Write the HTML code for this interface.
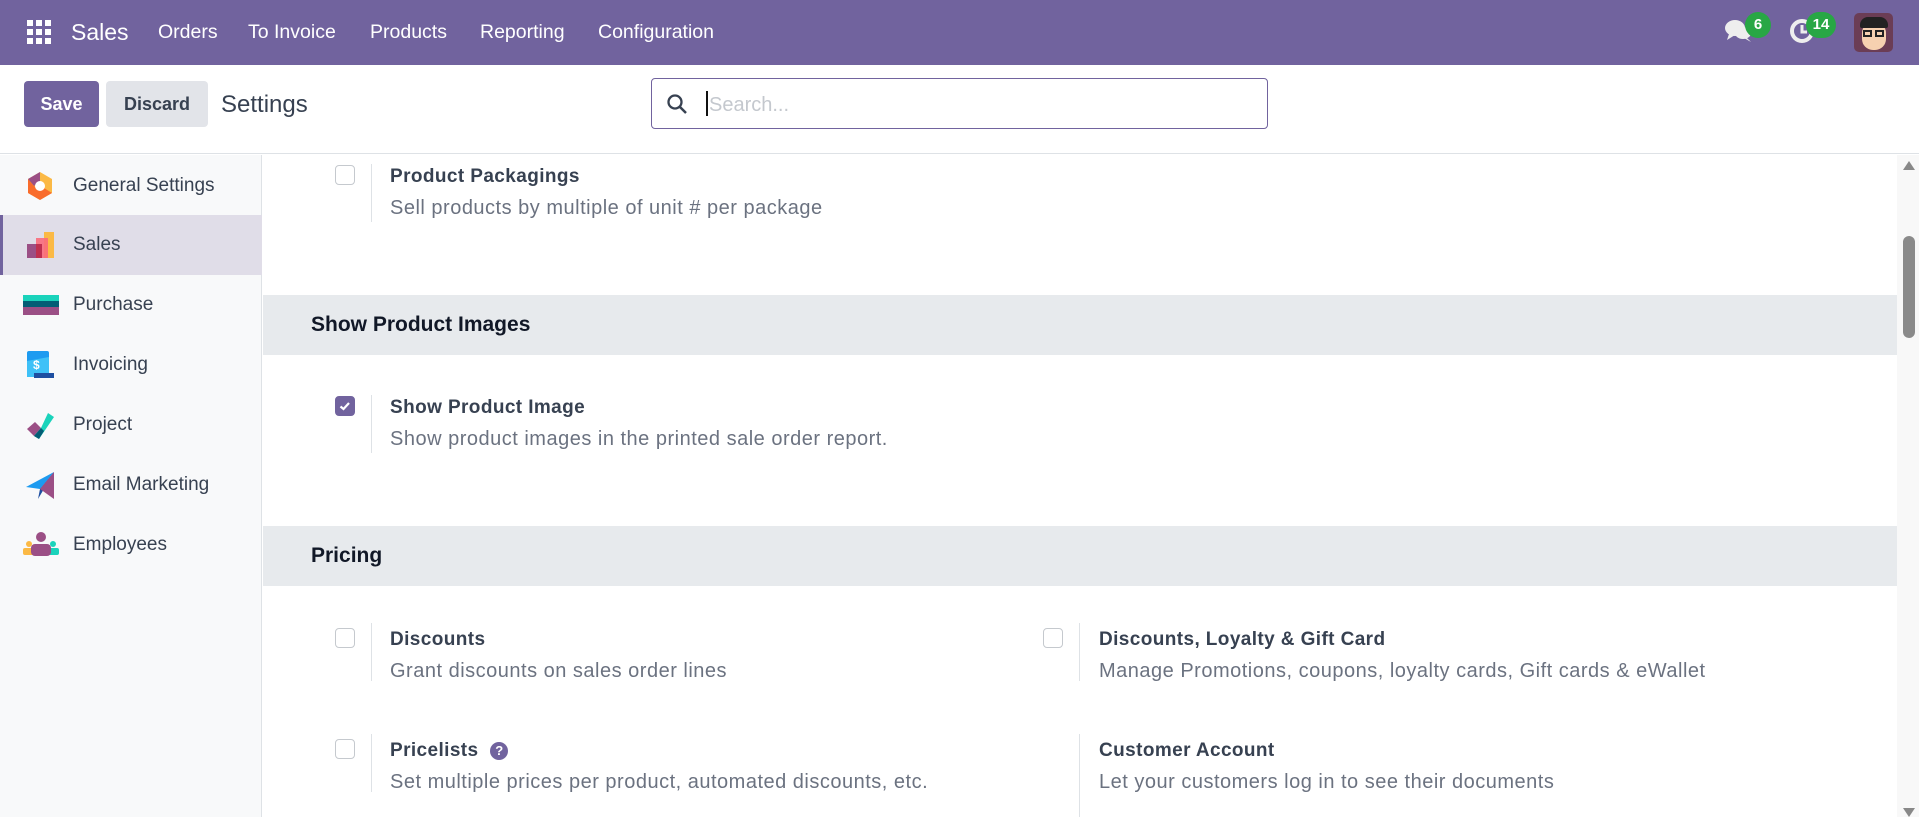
<!DOCTYPE html>
<html><head><meta charset="utf-8"><style>
*{box-sizing:border-box;margin:0;padding:0}
body{width:1919px;height:817px;overflow:hidden;font-family:"Liberation Sans",sans-serif;background:#fff;color:#374151;position:relative}
.abs{position:absolute}
.nav{left:0;top:0;width:1919px;height:65px;background:#71639e}
.nav span{position:absolute;color:#fff;font-size:19.5px;top:21px}
.cp{left:0;top:65px;width:1919px;height:89px;border-bottom:1px solid #dee2e6;background:#fff}
.btn{position:absolute;top:81px;height:46px;border-radius:4px;font-weight:bold;font-size:18px;line-height:46px;text-align:center}
.side{left:0;top:155px;width:262px;height:662px;background:#f8f9fa;border-right:1px solid #dee2e6}
.si{position:absolute;left:0;width:262px;height:60px}
.si .t{position:absolute;left:73px;top:19px;font-size:19px;color:#374151}
.si svg{position:absolute;left:24px;top:14px}
.hdr{position:absolute;left:263px;width:1634px;height:60px;background:#e7eaed}
.hdr span{position:absolute;left:48px;top:18px;font-size:21px;font-weight:bold;color:#111827}
.cb{position:absolute;width:20px;height:20px;border:1px solid #c5c9ce;border-radius:4px;background:#fff}
.vl{position:absolute;width:1px;height:58px;background:#dee2e6}
.tt{position:absolute;font-size:19px;letter-spacing:0.4px;font-weight:bold;color:#374151}
.dd{position:absolute;font-size:20px;letter-spacing:0.5px;color:#6b7280}
</style></head><body>
<div class="abs nav">
<svg class="abs" style="left:27px;top:20px" width="24" height="24" viewBox="0 0 24 24" fill="#fff"><rect x="0" y="0" width="6" height="6"/><rect x="9" y="0" width="6" height="6"/><rect x="18" y="0" width="6" height="6"/><rect x="0" y="9" width="6" height="6"/><rect x="9" y="9" width="6" height="6"/><rect x="18" y="9" width="6" height="6"/><rect x="0" y="18" width="6" height="6"/><rect x="9" y="18" width="6" height="6"/><rect x="18" y="18" width="6" height="6"/></svg>
<span style="left:71px;top:19px;font-size:23px">Sales</span>
<span style="left:158px">Orders</span>
<span style="left:248px">To Invoice</span>
<span style="left:370px">Products</span>
<span style="left:480px">Reporting</span>
<span style="left:598px">Configuration</span>
<svg class="abs" style="left:1724px;top:18px" width="30" height="26" viewBox="0 0 30 26" fill="#eee"><ellipse cx="11" cy="10" rx="10" ry="8"/><path d="M5 16 L3 22 L11 17Z"/><ellipse cx="19" cy="15" rx="8" ry="6"/><path d="M22 19 L27 24 L20 20Z"/></svg>
<div class="abs" style="left:1745px;top:12px;width:26px;height:26px;border-radius:13px;background:#28a745;color:#fff;font-weight:bold;font-size:15px;text-align:center;line-height:26px">6</div>
<svg class="abs" style="left:1788px;top:17px" width="28" height="28" viewBox="0 0 28 28"><circle cx="14" cy="14" r="10" fill="none" stroke="#eee" stroke-width="4"/><path d="M14 8 V15 H19" stroke="#eee" stroke-width="3" fill="none"/></svg>
<div class="abs" style="left:1806px;top:12px;width:30px;height:26px;border-radius:13px;background:#28a745;color:#fff;font-weight:bold;font-size:15px;text-align:center;line-height:26px">14</div>
<div class="abs" style="left:1854px;top:13px;width:39px;height:39px;border-radius:5px;background:#6b3d55;overflow:hidden">
<div class="abs" style="left:8px;top:9px;width:24px;height:28px;border-radius:11px;background:#f6d1b0"></div>
<div class="abs" style="left:6px;top:4px;width:28px;height:11px;border-radius:8px 8px 2px 2px;background:#222"></div>
<div class="abs" style="left:9px;top:17px;width:9px;height:7px;border:2px solid #222"></div>
<div class="abs" style="left:21px;top:17px;width:9px;height:7px;border:2px solid #222"></div>
</div>
</div>
<div class="abs cp">
<div class="btn" style="left:24px;top:16px;width:75px;background:#71639e;color:#fff">Save</div>
<div class="btn" style="left:106px;top:16px;width:102px;background:#e2e4e9;color:#374151">Discard</div>
<div class="abs" style="left:221px;top:26px;font-size:24px;color:#374151">Settings</div>
<div class="abs" style="left:651px;top:13px;width:617px;height:51px;border:1px solid #71639e;border-radius:4px">
<svg class="abs" style="left:14px;top:14px" width="22" height="22" viewBox="0 0 22 22"><circle cx="9" cy="9" r="6.5" fill="none" stroke="#374151" stroke-width="2.3"/><path d="M14 14 L20 20" stroke="#374151" stroke-width="2.5"/></svg>
<div class="abs" style="left:54px;top:12px;width:2px;height:25px;background:#111"></div>
<div class="abs" style="left:57px;top:15px;font-size:20px;color:#c4c8ce">Search...</div>
</div>
</div>
<div class="abs side">
<div class="si" style="top:1px"><svg width="32" height="32" viewBox="0 0 32 32"><path d="M16 2 L28 9 V23 L16 30 L4 23 V9Z" fill="#fbb945"/><path d="M4 9 L16 2 V12 L10 16Z" fill="#9b4f85"/><path d="M4 23 L16 30 L28 23 L20 18 L16 20 L10 16 L4 9Z" fill="#f96c2b"/><circle cx="16" cy="16" r="5" fill="#fff"/></svg><span class="t">General Settings</span></div>
<div class="si" style="top:60px;background:#e0dde8;border-left:3px solid #71639e"><svg width="32" height="32" viewBox="0 0 32 32" style="left:21px"><rect x="20" y="3" width="10" height="26" fill="#fbb945"/><rect x="12" y="9" width="12" height="20" fill="#f96c7b" opacity=".9"/><rect x="3" y="15" width="12" height="14" fill="#9b4f85"/><rect x="12" y="15" width="6" height="14" fill="#c0304f"/></svg><span class="t" style="left:70px">Sales</span></div>
<div class="si" style="top:120px"><svg width="36" height="32" viewBox="0 0 36 32" style="left:23px"><rect x="0" y="6" width="36" height="6" fill="#1ad3bb"/><rect x="0" y="12" width="36" height="6" fill="#035d75"/><rect x="0" y="18" width="36" height="8" fill="#9b4f85"/></svg><span class="t">Purchase</span></div>
<div class="si" style="top:180px"><svg width="32" height="32" viewBox="0 0 32 32"><rect x="3" y="2" width="22" height="26" rx="2" fill="#1d9bf0"/><path d="M3 12 L25 8 V28 H3Z" fill="#3ec1f7"/><rect x="10" y="24" width="20" height="5" fill="#1e4fa1"/><text x="9" y="20" font-size="12" font-weight="bold" fill="#fff" font-family="Liberation Sans">$</text></svg><span class="t">Invoicing</span></div>
<div class="si" style="top:240px"><svg width="32" height="32" viewBox="0 0 32 32"><path d="M3 20 L11 13 L17 19 L10 27Z" fill="#9b4f85"/><path d="M10 27 L17 19 L24 4 L30 8 L15 30Z" fill="#1ad3bb"/><path d="M10 27 L17 19 L20 22 L15 30Z" fill="#035d75"/></svg><span class="t">Project</span></div>
<div class="si" style="top:300px"><svg width="32" height="32" viewBox="0 0 32 32"><path d="M30 3 L2 18 L16 20Z" fill="#1d9bf0"/><path d="M30 3 L16 20 L14 30Z" fill="#1e4fa1"/><path d="M30 3 L30 30 L16 20Z" fill="#9b4f85"/></svg><span class="t">Email Marketing</span></div>
<div class="si" style="top:360px"><svg width="36" height="32" viewBox="0 0 36 32" style="left:23px"><circle cx="18" cy="8" r="5" fill="#9b4f85"/><circle cx="6" cy="15" r="3" fill="#fbb945"/><circle cx="30" cy="15" r="3" fill="#1ad3bb"/><rect x="0" y="19" width="12" height="7" rx="2" fill="#fbb945"/><rect x="24" y="19" width="12" height="7" rx="2" fill="#1ad3bb"/><rect x="8" y="15" width="20" height="12" rx="4" fill="#9b4f85"/></svg><span class="t">Employees</span></div>
</div>
<!-- content -->
<div class="cb" style="left:335px;top:165px"></div><div class="vl" style="left:371px;top:164px"></div>
<div class="tt" style="left:390px;top:166px">Product Packagings</div>
<div class="dd" style="left:390px;top:197px">Sell products by multiple of unit # per package</div>
<div class="hdr" style="top:295px"><span>Show Product Images</span></div>
<div class="cb" style="left:335px;top:396px;background:#71639e;border-color:#71639e"><svg width="18" height="18" viewBox="0 0 18 18"><path d="M4.5 9.5 L7.5 12 L13 6" stroke="#fff" stroke-width="2.2" fill="none"/></svg></div>
<div class="vl" style="left:371px;top:395px"></div>
<div class="tt" style="left:390px;top:397px">Show Product Image</div>
<div class="dd" style="left:390px;top:428px">Show product images in the printed sale order report.</div>
<div class="hdr" style="top:526px"><span>Pricing</span></div>
<div class="cb" style="left:335px;top:628px"></div><div class="vl" style="left:371px;top:623px"></div>
<div class="tt" style="left:390px;top:629px">Discounts</div>
<div class="dd" style="left:390px;top:660px">Grant discounts on sales order lines</div>
<div class="cb" style="left:1043px;top:628px"></div><div class="vl" style="left:1079px;top:623px"></div>
<div class="tt" style="left:1099px;top:629px">Discounts, Loyalty &amp; Gift Card</div>
<div class="dd" style="left:1099px;top:660px">Manage Promotions, coupons, loyalty cards, Gift cards &amp; eWallet</div>
<div class="cb" style="left:335px;top:739px"></div><div class="vl" style="left:371px;top:734px"></div>
<div class="tt" style="left:390px;top:740px">Pricelists <span style="display:inline-block;width:18px;height:18px;border-radius:9px;background:#71639e;color:#fff;font-size:13px;letter-spacing:0;text-align:center;line-height:18px;vertical-align:1px;margin-left:6px">?</span></div>
<div class="dd" style="left:390px;top:771px">Set multiple prices per product, automated discounts, etc.</div>
<div class="vl" style="left:1079px;top:734px;height:83px"></div>
<div class="tt" style="left:1099px;top:740px">Customer Account</div>
<div class="dd" style="left:1099px;top:771px">Let your customers log in to see their documents</div>
<!-- scrollbar -->
<div class="abs" style="left:1897px;top:155px;width:22px;height:662px;background:#f8f8f8"></div>
<div class="abs" style="left:1903px;top:161px;width:0;height:0;border-left:6px solid transparent;border-right:6px solid transparent;border-bottom:9px solid #888"></div>
<div class="abs" style="left:1903px;top:236px;width:12px;height:102px;border-radius:6px;background:#8a8a8a"></div>
<div class="abs" style="left:1903px;top:808px;width:0;height:0;border-left:6px solid transparent;border-right:6px solid transparent;border-top:9px solid #888"></div>
</body></html>
